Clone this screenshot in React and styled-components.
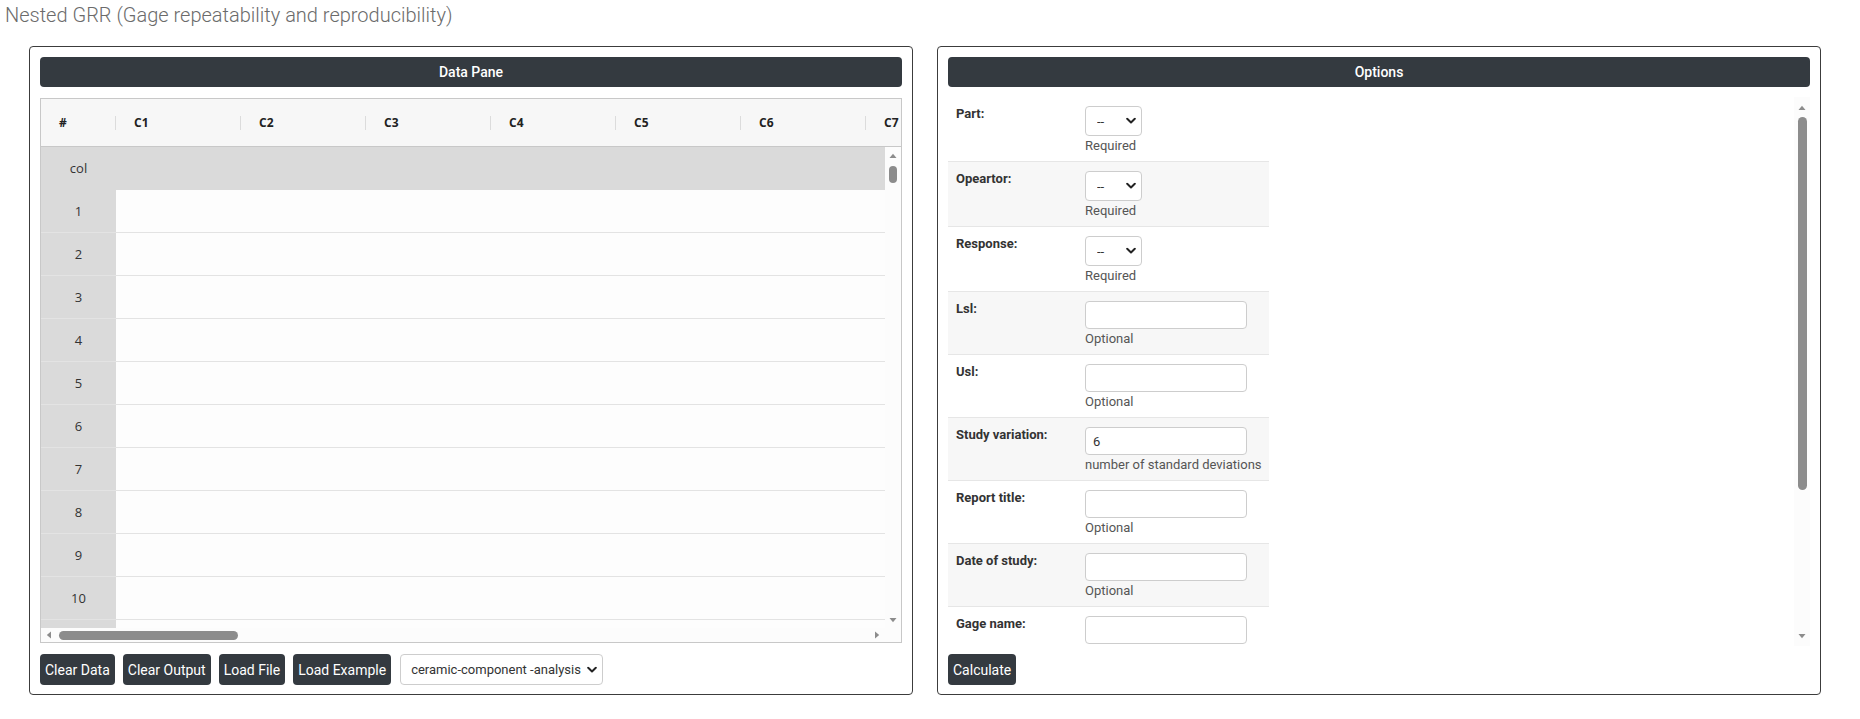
import styled, { createGlobalStyle } from 'styled-components';

const GlobalStyle = createGlobalStyle`
  * { box-sizing: border-box; }
  body {
    margin: 0;
    background: #fff;
    font-family: Roboto, "Liberation Sans", sans-serif;
    color: #333;
  }
`;

const COLUMNS = ['C1', 'C2', 'C3', 'C4', 'C5', 'C6', 'C7'];
const ROWS = ['col', '1', '2', '3', '4', '5', '6', '7', '8', '9', '10', ''];

const FIELDS = [
  { label: 'Part:', kind: 'select', help: 'Required' },
  { label: 'Opeartor:', kind: 'select', help: 'Required' },
  { label: 'Response:', kind: 'select', help: 'Required' },
  { label: 'Lsl:', kind: 'input', help: 'Optional' },
  { label: 'Usl:', kind: 'input', help: 'Optional' },
  { label: 'Study variation:', kind: 'input', value: '6', help: 'number of standard deviations' },
  { label: 'Report title:', kind: 'input', help: 'Optional' },
  { label: 'Date of study:', kind: 'input', help: 'Optional' },
  { label: 'Gage name:', kind: 'input' },
];

function Chevron() {
  return (
    <svg width="10" height="7" viewBox="0 0 10 7">
      <path d="M1.2 1.3 L5 5 L8.8 1.3" fill="none" stroke="#222" strokeWidth="2" strokeLinecap="round" strokeLinejoin="round" />
    </svg>
  );
}

function Arrow({ dir }) {
  const shapes = {
    up: '0.5,5 4,0.8 7.5,5',
    down: '0.5,0 7.5,0 4,4.2',
    left: '5,0.5 5,7.5 0.8,4',
    right: '0,0.5 0,7.5 4.2,4',
  };
  const vertical = dir === 'up' || dir === 'down';
  return (
    <svg width={vertical ? 8 : 5} height={vertical ? 5 : 8} viewBox={vertical ? '0 0 8 5' : '0 0 5 8'}>
      <polygon points={shapes[dir]} fill="#8c8c8c" />
    </svg>
  );
}

function VerticalBar({ pad, gap, thumb, width }) {
  return (
    <VScroll $pad={pad}>
      <ArrowBox><Arrow dir="up" /></ArrowBox>
      <VThumb style={{ height: thumb, marginTop: gap }} $w={width} />
      <Spacer />
      <ArrowBox><Arrow dir="down" /></ArrowBox>
    </VScroll>
  );
}

export default function App() {
  return (
    <>
      <GlobalStyle />
      <Title>Nested GRR (Gage repeatability and reproducibility)</Title>
      <Panels>
        <Panel>
          <PaneHeader>Data Pane</PaneHeader>
          <Grid>
            <HeadRow>
              <HeadCell $w={75}>#<Divider /></HeadCell>
              {COLUMNS.map((c) => (
                <HeadCell key={c} $w={125}>{c}<Divider /></HeadCell>
              ))}
            </HeadRow>
            <Body>
              <Rows>
                {ROWS.map((r, i) => (
                  <Row key={i}>
                    <RowHead $title={r === 'col'}>{r}</RowHead>
                    {COLUMNS.map((c) => (
                      <Cell key={c} $title={r === 'col'} />
                    ))}
                  </Row>
                ))}
              </Rows>
              <VerticalBar pad={1} gap={4} thumb={17} width={8} />
            </Body>
            <HScrollRow>
              <HTrack>
                <HArrowBox><Arrow dir="left" /></HArrowBox>
                <HThumb style={{ width: 179 }} />
                <Spacer />
                <HArrowBox><Arrow dir="right" /></HArrowBox>
              </HTrack>
              <Corner />
            </HScrollRow>
          </Grid>
          <Toolbar>
            <DarkButton>Clear Data</DarkButton>
            <DarkButton>Clear Output</DarkButton>
            <DarkButton>Load File</DarkButton>
            <DarkButton>Load Example</DarkButton>
            <SelectWrap $w={203}>
              <Select defaultValue="ceramic" $pad={10}>
                <option value="ceramic">ceramic-component -analysis</option>
              </Select>
              <Caret><Chevron /></Caret>
            </SelectWrap>
          </Toolbar>
        </Panel>

        <Panel>
          <PaneHeader>Options</PaneHeader>
          <OptionsArea>
            <FormList>
              {FIELDS.map((f, i) => (
                <FieldRow key={f.label} $striped={i % 2 === 1}>
                  <FieldLabel>{f.label}</FieldLabel>
                  <FieldValue>
                    {f.kind === 'select' ? (
                      <SelectWrap $w={57} $h={30}>
                        <Select defaultValue="none" $pad={11}>
                          <option value="none">--</option>
                        </Select>
                        <Caret><Chevron /></Caret>
                      </SelectWrap>
                    ) : (
                      <TextInput defaultValue={f.value || ''} />
                    )}
                    {f.help && <Help>{f.help}</Help>}
                  </FieldValue>
                </FieldRow>
              ))}
            </FormList>
            <VerticalBar pad={3} gap={3} thumb={373} width={9} />
          </OptionsArea>
          <Toolbar $top={8}>
            <DarkButton>Calculate</DarkButton>
          </Toolbar>
        </Panel>
      </Panels>
    </>
  );
}

const Title = styled.h1`
  margin: 0;
  padding: 3px 0 0 5px;
  font-family: Roboto, "Liberation Sans", sans-serif;
  font-weight: 300;
  font-size: 20px;
  line-height: 24px;
  color: #6b6b6b;
`;

const Panels = styled.div`
  display: flex;
  gap: 24px;
  margin-top: 19px;
  padding-left: 29px;
`;

const Panel = styled.section`
  width: 884px;
  height: 649px;
  border: 1px solid #3c3c3c;
  border-radius: 4px;
  padding: 10px 10px 9px;
  display: flex;
  flex-direction: column;
`;

const PaneHeader = styled.div`
  height: 30px;
  flex: none;
  background: #343a40;
  border-radius: 4px;
  color: #fff;
  font-size: 14px;
  font-weight: 500;
  display: flex;
  align-items: center;
  justify-content: center;
`;

const Grid = styled.div`
  margin-top: 11px;
  height: 545px;
  flex: none;
  border: 1px solid #c8c8c8;
  display: flex;
  flex-direction: column;
  overflow: hidden;
  font-family: "Open Sans", "Liberation Sans", sans-serif;
`;

const HeadRow = styled.div`
  height: 48px;
  flex: none;
  display: flex;
  background: #f7f7f7;
  border-bottom: 1px solid #c8c8c8;
  overflow: hidden;
`;

const HeadCell = styled.div`
  width: ${(p) => p.$w}px;
  flex: none;
  display: flex;
  align-items: center;
  justify-content: space-between;
  padding-left: 18px;
  font-size: 12px;
  font-weight: 700;
  color: #222;
`;

const Divider = styled.span`
  width: 1px;
  height: 14px;
  background: #dcdcdc;
`;

const Body = styled.div`
  flex: 1;
  min-height: 0;
  display: flex;
`;

const Rows = styled.div`
  flex: 1;
  min-width: 0;
  overflow: hidden;
`;

const Row = styled.div`
  display: flex;
  height: 43px;
`;

const RowHead = styled.div`
  width: 75px;
  flex: none;
  display: flex;
  align-items: center;
  justify-content: center;
  background: #dadada;
  border-bottom: 1px solid ${(p) => (p.$title ? '#dadada' : '#e3e3e3')};
  font-size: 13px;
  color: #333;
`;

const Cell = styled.div`
  width: 125px;
  flex: none;
  background: ${(p) => (p.$title ? '#dadada' : '#fdfdfd')};
  border-bottom: 1px solid ${(p) => (p.$title ? '#dadada' : '#e3e3e3')};
`;

const VScroll = styled.div`
  width: 16px;
  flex: none;
  display: flex;
  flex-direction: column;
  align-items: center;
  padding: ${(p) => p.$pad}px 0;
  background: #fcfcfc;
`;

const ArrowBox = styled.div`
  height: 14px;
  flex: none;
  display: flex;
  align-items: center;
  justify-content: center;
`;

const VThumb = styled.div`
  width: ${(p) => p.$w}px;
  flex: none;
  border-radius: 5px;
  background: #8c8c8c;
`;

const Spacer = styled.div`
  flex: 1;
`;

const HScrollRow = styled.div`
  height: 14px;
  flex: none;
  display: flex;
  background: #fcfcfc;
`;

const HTrack = styled.div`
  flex: 1;
  display: flex;
  align-items: center;
  padding-right: 1px;
`;

const HArrowBox = styled.div`
  width: 14px;
  flex: none;
  display: flex;
  align-items: center;
  justify-content: center;
`;

const HThumb = styled.div`
  height: 9px;
  margin-left: 4px;
  flex: none;
  border-radius: 5px;
  background: #8c8c8c;
`;

const Corner = styled.div`
  width: 16px;
  flex: none;
`;

const Toolbar = styled.div`
  margin-top: ${(p) => p.$top ?? 11}px;
  display: flex;
  align-items: center;
  gap: 8px;
  height: 31px;
  flex: none;
`;

const DarkButton = styled.button`
  height: 31px;
  padding: 0 5px;
  border: none;
  border-radius: 4px;
  background: #343a40;
  color: #fff;
  font-family: Roboto, "Liberation Sans", sans-serif;
  font-size: 14px;
`;

const SelectWrap = styled.div`
  position: relative;
  width: ${(p) => p.$w}px;
  height: ${(p) => p.$h ?? 31}px;
  margin-left: ${(p) => (p.$h ? 0 : 1)}px;
`;

const Select = styled.select`
  appearance: none;
  width: 100%;
  height: 100%;
  padding: 0 0 0 ${(p) => p.$pad}px;
  border: 1px solid #cdcdcd;
  border-radius: 4px;
  background: #fff;
  font-family: Roboto, "Liberation Sans", sans-serif;
  font-size: 13px;
  color: #333;
`;

const Caret = styled.span`
  position: absolute;
  right: 6px;
  top: 50%;
  transform: translateY(-50%);
  display: flex;
  pointer-events: none;
`;

const OptionsArea = styled.div`
  margin-top: 10px;
  height: 549px;
  flex: none;
  display: flex;
`;

const FormList = styled.div`
  flex: 1;
  overflow: hidden;
`;

const FieldRow = styled.div`
  width: 321px;
  display: grid;
  grid-template-columns: 137px 184px;
  padding: 9px 0 8px;
  border-bottom: 1px solid #e6e6e6;
  background: ${(p) => (p.$striped ? '#f7f7f7' : '#fff')};
`;

const FieldLabel = styled.div`
  padding-left: 8px;
  font-size: 13px;
  font-weight: 700;
  line-height: 16px;
  color: #333;
`;

const FieldValue = styled.div`
  display: flex;
  flex-direction: column;
  align-items: flex-start;
`;

const TextInput = styled.input`
  width: 162px;
  height: 28px;
  padding: 0 7px;
  border: 1px solid #cdcdcd;
  border-radius: 4px;
  font-family: Roboto, "Liberation Sans", sans-serif;
  font-size: 13px;
  color: #333;
`;

const Help = styled.span`
  margin-top: 2px;
  font-size: 13px;
  line-height: 15px;
  color: #555;
`;
